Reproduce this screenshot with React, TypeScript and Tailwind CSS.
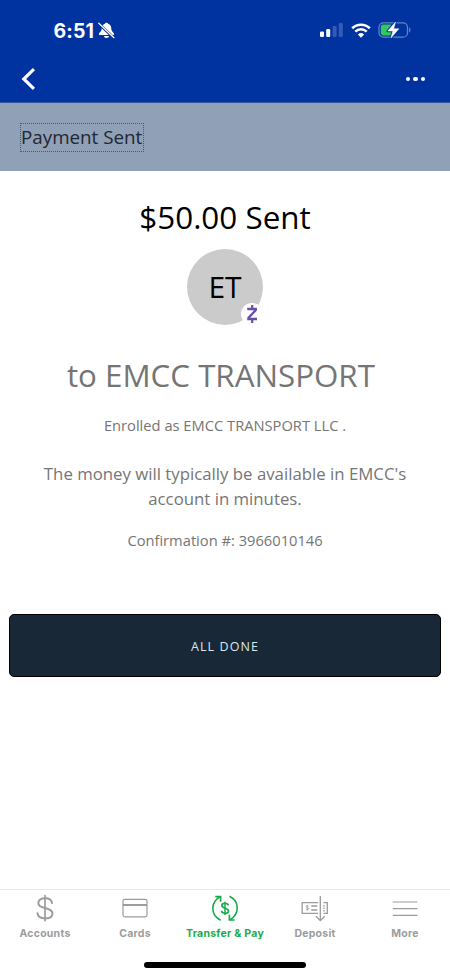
import type { ReactNode } from "react";

function StatusBar() {
  return (
    <div className="flex h-[60px] items-center justify-between pl-[53.5px] pr-[38px] text-white">
      <div className="flex items-center gap-[4px]">
        <span className="mt-[2px] font-['Inter',sans-serif] text-[19.5px] font-bold leading-6 tracking-[0.1px]">6:51</span>
        <svg className="mt-[1px] h-[17px] w-[17px]" viewBox="0 0 17 17" fill="none" aria-hidden>
          <path
            d="M8.5.8c-1 0-1.500.5-1.600 1C4.700 2.500 3.700 4.300 3.700 6.500 3.700 9.800.9 10.600.9 12.100c0 .6.4.9 1 .9h13.200c.6 0 1-.3 1-.9 0-1.500-2.800-2.300-2.800-5.600 0-2.200-1-4-3.200-4.700-.1-.5-.6-1-1.600-1ZM5.900 14.100c.3 1.200 1.300 1.900 2.600 1.900s2.300-.7 2.600-1.900H5.900Z"
            fill="white"
          />
          <path d="M0.800 1.700 15.600 15.700" stroke="#0033a0" strokeWidth="2.800" />
          <path d="M0.800 1.200 16 15.700" stroke="white" strokeWidth="1.200" strokeLinecap="round" />
        </svg>
      </div>

      <div className="flex items-center">
        <svg className="h-[16px] w-[24px]" viewBox="0 0 24 16" aria-hidden>
          <rect x="0" y="9.500" width="4" height="5.500" rx="1.200" fill="white" />
          <rect x="6.200" y="7" width="4" height="8" rx="1.200" fill="white" />
          <rect x="12.600" y="4" width="4" height="11" rx="1.200" fill="white" fillOpacity="0.200" />
          <rect x="18.800" y="1" width="4" height="14" rx="1.200" fill="white" fillOpacity="0.200" />
        </svg>
        <svg className="ml-[6.5px] h-[15px] w-[20px]" viewBox="0 0 20 15" aria-hidden>
          <path d="M1.200 5.300a12.600 12.600 0 0 1 17.600 0" fill="none" stroke="white" strokeWidth="2.600" />
          <path d="M4.300 8.600a8.200 8.200 0 0 1 11.400 0" fill="none" stroke="white" strokeWidth="2.500" />
          <path d="M10 14.700 6.900 11.500a4.500 4.500 0 0 1 6.200 0Z" fill="white" />
        </svg>
        <svg className="ml-[7.5px] h-[18px] w-[34px]" viewBox="0 0 34 18" aria-hidden>
          <rect x="1" y="1.800" width="28.500" height="14.400" rx="4.500" fill="none" stroke="white" strokeOpacity="0.400" strokeWidth="1.200" />
          <path d="M31.200 6.500c1.700.5 1.700 4.500 0 5Z" fill="white" fillOpacity="0.450" />
          <rect x="2.800" y="3.600" width="12.500" height="10.800" rx="2.800" fill="#34c759" />
          <path d="M17.500 1 9.800 10h5.100l-2 7 8-9.200h-5.200Z" fill="white" stroke="#0033a0" strokeWidth="2.600" strokeLinejoin="round" />
          <path d="M17.500 1 9.800 10h5.100l-2 7 8-9.200h-5.200Z" fill="white" stroke="white" strokeWidth="0.500" strokeLinejoin="round" />
        </svg>
      </div>
    </div>
  );
}

function NavHeader() {
  return (
    <div className="flex h-[43px] items-center justify-between border-b border-[#3157a3] pb-1 pl-[21px] pr-[25px]">
      <button type="button" aria-label="Back">
        <svg className="h-[24px] w-[15px]" viewBox="0 0 15 24" fill="none" aria-hidden>
          <path d="M11.800 3.200 2.800 12l9 8.800" stroke="white" strokeWidth="3.200" strokeLinecap="square" />
        </svg>
      </button>
      <button type="button" aria-label="More options" className="flex gap-[3px]">
        <span className="h-[4.5px] w-[4.5px] rounded-full bg-white" />
        <span className="h-[4.5px] w-[4.5px] rounded-full bg-white" />
        <span className="h-[4.5px] w-[4.5px] rounded-full bg-white" />
      </button>
    </div>
  );
}

function Avatar() {
  return (
    <div className="relative flex h-[76px] w-[76px] items-center justify-center rounded-full bg-[#cbcbcb] pb-[2px] text-[30px] text-black">
      ET
      <span className="absolute bottom-0 right-0 flex h-[22px] w-[22px] items-center justify-center rounded-full bg-white">
        <svg className="h-[20px] w-[14px]" viewBox="0 0 14 20" fill="none" stroke="#6a4fa6" aria-hidden>
          <path d="M2.200 5h8.600v1L3.400 14v1H12" strokeWidth="2.300" />
          <path d="M7.200 1v4M7.200 15v4" strokeWidth="2.200" />
        </svg>
      </span>
    </div>
  );
}

function DollarIcon() {
  return (
    <svg className="h-[28px] w-[20px]" viewBox="0 0 20 28" fill="none" stroke="currentColor" strokeLinecap="round" aria-hidden>
      <path d="M10 1.700v25" strokeWidth="1.700" />
      <path d="M17 9c-.3-3-3-4.800-7-4.800-3.900 0-6.700 1.900-6.700 4.700 0 3.200 2.900 4.200 6.700 5.100s7.500 2.200 7.500 5.500c0 3.100-3 4.900-7.300 4.900-4.600 0-7.400-2-7.700-5.200" strokeWidth="2" />
    </svg>
  );
}

function CardIcon() {
  return (
    <svg className="h-[28px] w-[28px]" viewBox="0 0 28 28" fill="none" stroke="currentColor" aria-hidden>
      <rect x="2" y="5.300" width="24" height="17.500" rx="1.800" strokeWidth="1.200" />
      <path d="M2 11h24" strokeWidth="2" />
    </svg>
  );
}

function TransferIcon() {
  return (
    <svg className="h-[28px] w-[28px]" viewBox="0 0 28 28" fill="none" stroke="currentColor" aria-hidden>
      <path d="M9.700 26.300C4.500 23.800 1.800 19.600 1.800 14.600 1.800 9.600 4.700 5.300 9 2.800" strokeWidth="1.600" />
      <path d="M4.300 2.600h5.300v5.200" strokeWidth="1.700" />
      <path d="M18.500 2.300c5 2.500 7.700 6.700 7.700 11.700 0 5-2.900 9.300-7.200 11.800" strokeWidth="1.600" />
      <path d="M23.700 26h-5.300v-5.200" strokeWidth="1.700" />
      <path d="M14 7.800v13.200" strokeWidth="1.500" />
      <path d="M17.300 11.500c-.2-1.400-1.500-2.200-3.300-2.200s-3.200.9-3.200 2.300c0 1.700 1.500 2.100 3.200 2.600s3.500 1 3.500 2.700c0 1.500-1.500 2.400-3.400 2.400-2.100 0-3.500-1-3.600-2.500" strokeWidth="1.700" />
    </svg>
  );
}

function DepositIcon() {
  return (
    <svg className="h-[28px] w-[28px]" viewBox="0 0 28 28" fill="none" stroke="currentColor" aria-hidden>
      <path d="M17.200 8.600H1.200v10.800h16M22.500 8.600h3.800v10.800h-3.800" strokeWidth="1.300" />
      <path d="M7.600 12.100c-.4-.6-2.600-.6-2.600.5 0 1.200 2.800.7 2.800 2 0 1.100-2.400 1.100-2.900.3M6.300 10.900v6" strokeWidth="0.800" />
      <path d="M10.300 12h6M10.300 16h6" strokeWidth="1.300" />
      <path d="M23 11v7" strokeWidth="1.300" strokeDasharray="1.500 1" />
      <path d="M19.300 2v24.500M14.900 22.300l4.400 4.400 4.400-4.400" strokeWidth="1.300" />
    </svg>
  );
}

function MoreIcon() {
  return (
    <svg className="h-[28px] w-[28px]" viewBox="0 0 28 28" fill="none" stroke="currentColor" aria-hidden>
      <path d="M1.800 8h24.600M1.800 14.700h24.600M1.800 21.300h24.600" strokeWidth="1.200" />
    </svg>
  );
}

const tabs: { label: string; icon: ReactNode; active?: boolean }[] = [
  { label: "Accounts", icon: <DollarIcon /> },
  { label: "Cards", icon: <CardIcon /> },
  { label: "Transfer & Pay", icon: <TransferIcon />, active: true },
  { label: "Deposit", icon: <DepositIcon /> },
  { label: "More", icon: <MoreIcon /> },
];

function TabBar() {
  return (
    <nav className="flex h-[87px] flex-col border-t border-[#e9e9e9] bg-white">
      <div className="flex pt-[4px]">
        {tabs.map((tab) => (
          <button
            key={tab.label}
            type="button"
            className={`flex flex-1 basis-0 flex-col items-center font-['Inter',sans-serif] text-[10.5px] font-bold leading-4 tracking-[0.25px] ${
              tab.active ? "text-[#1cab4b]" : "text-[#9c9c9c]"
            }`}
          >
            {tab.icon}
            <span className="mt-[4px] whitespace-nowrap">{tab.label}</span>
          </button>
        ))}
      </div>
      <div className="mx-auto mb-[8px] mt-auto h-[6px] w-[162px] rounded-full bg-black" />
    </nav>
  );
}

export default function App() {
  return (
    <div className="flex h-[976px] w-[450px] flex-col bg-white font-['Open_Sans',sans-serif]">
      <header className="bg-[#0033a0]">
        <StatusBar />
        <NavHeader />
      </header>

      <div className="flex h-[68px] items-center bg-[#90a0b7] pl-[20px]">
        <h1 className="border border-dotted border-[#1f55f5] pr-[1px] text-[18.8px] leading-[27px] text-[#1f2730]">Payment Sent</h1>
      </div>

      <main className="flex flex-1 flex-col items-center text-center text-[#757575]">
        <p className="mt-[22px] text-[31.4px] leading-[48px] text-black">$50.00 Sent</p>
        <div className="mt-[8px]">
          <Avatar />
        </div>
        <p className="mt-[26px] whitespace-pre text-[31.3px] leading-[48px]">to EMCC TRANSPORT&nbsp;</p>
        <p className="mt-[16px] text-[14.7px] leading-[20px]">Enrolled as EMCC TRANSPORT LLC .</p>
        <p className="mt-[27px] w-[390px] text-[16.8px] leading-[24.5px]">
          The money will typically be available in EMCC's account in minutes.
        </p>
        <p className="mt-[19px] text-[14.7px] leading-[20px]">Confirmation #: 3966010146</p>
        <div className="mt-[64px] w-full px-[9px]">
          <button
            type="button"
            className="h-[63px] w-full rounded-[5px] border border-black bg-[#182837] pt-[3px] text-[12.5px] tracking-[1.1px] text-[#dde6ec]"
          >
            ALL DONE
          </button>
        </div>
      </main>

      <TabBar />
    </div>
  );
}
